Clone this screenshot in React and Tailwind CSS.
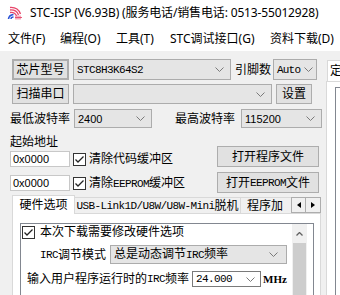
import React from "react";

function Chev() {
  return (
    <svg width="9" height="5" viewBox="0 0 9 5" className="shrink-0">
      <polyline points="0.5,0.5 4.5,4.5 8.5,0.5" fill="none" stroke="#7a7a7a" strokeWidth="1" />
    </svg>
  );
}

function Check() {
  return (
    <div className="w-[13px] h-[13px] border border-[#333333] bg-white flex items-center justify-center shrink-0">
      <svg width="11" height="11" viewBox="0 0 11 11">
        <polyline points="1.5,5.5 4,8 9.5,2.5" fill="none" stroke="#222222" strokeWidth="1.3" />
      </svg>
    </div>
  );
}

function Combo({ className, children }) {
  return (
    <div className={"h-full flex items-center justify-between border border-[#acacac] bg-[#e5e5e5] pl-[3px] shrink-0 overflow-hidden " + className}>
      <div className="whitespace-nowrap min-w-0">{children}</div>
      <Chev />
    </div>
  );
}

function Btn({ className, children }) {
  return (
    <div className={"h-full flex items-center justify-center bg-[#e1e1e1] border border-[#adadad] shrink-0 whitespace-nowrap " + className}>
      {children}
    </div>
  );
}

function Logo() {
  return (
    <svg width="16" height="14" viewBox="0 0 16 14">
      <path d="M3 1.5 Q11 1 13.5 8" fill="none" stroke="#e8466a" strokeWidth="1.3" />
      <path d="M3 4 Q9.5 3.5 11.5 9" fill="none" stroke="#e8466a" strokeWidth="1.3" />
      <path d="M3 6.5 Q8 6 9.5 10" fill="none" stroke="#e8466a" strokeWidth="1.3" />
      <path d="M1.5 13 Q2 9 6.5 8.5" fill="none" stroke="#2a52d6" strokeWidth="1.6" />
      <path d="M4 13 Q4 11 6.5 11" fill="none" stroke="#2a52d6" strokeWidth="1.4" />
      <path d="M9 10 V13.5 M11 9.5 V13.5 M13 9.5 V13.5 M8 11.5 H15" stroke="#e8466a" strokeWidth="0.9" />
    </svg>
  );
}

export default function App() {
  return (
    <div className="w-[340px] h-[295px] overflow-hidden bg-[#f0f0f0] text-black font-['Noto_Sans','Noto_Sans_CJK_SC',sans-serif] text-[12px] leading-[14px] flex flex-col">
      {/* title bar */}
      <div className="h-[27px] bg-white flex items-center shrink-0 whitespace-nowrap">
        <div className="ml-[7px] w-[16px] h-[14px] mb-[2px]">
          <Logo />
        </div>
        <div className="ml-[7px] mb-[1px] tracking-[-0.15px]">STC-ISP (V6.93B) (服务电话/销售电话: 0513-55012928)</div>
      </div>
      {/* menu bar */}
      <div className="h-[24px] bg-white flex items-center shrink-0 whitespace-nowrap pl-[8px]">
        <div className="w-[52px]">文件(F)</div>
        <div className="w-[56px]">编程(O)</div>
        <div className="w-[54px]">工具(T)</div>
        <div className="w-[100px]">STC调试接口(G)</div>
        <div className="w-[70px]">资料下载(D)</div>
      </div>
      {/* body */}
      <div className="flex-1 flex min-h-0">
        <div className="w-[322px] shrink-0 pl-[10px] pt-[8px] flex flex-col">
          {/* row 1 */}
          <div className="h-[21px] flex items-stretch shrink-0">
            <Btn className="ml-[2px] w-[57px] border-2 border-[#0078d7]">芯片型号</Btn>
            <Combo className="ml-[4px] w-[158px] pr-[6px] font-['Liberation_Mono',monospace] text-[11px] tracking-[-0.6px]">STC8H3K64S2</Combo>
            <div className="ml-[4px] w-[38px] flex items-center">引脚数</div>
            <Combo className="w-[44px] pr-[3px] font-['Liberation_Mono',monospace] text-[11px] tracking-[-0.8px]">Auto</Combo>
          </div>
          {/* row 2 */}
          <div className="mt-[4px] h-[20px] flex items-stretch shrink-0">
            <Btn className="ml-[2px] w-[57px]">扫描串口</Btn>
            <Combo className="ml-[4px] w-[199px] pr-[6px]"></Combo>
            <Btn className="ml-[4px] w-[36px]">设置</Btn>
          </div>
          {/* row 3 */}
          <div className="mt-[5px] h-[19px] flex items-stretch shrink-0">
            <div className="w-[64px] flex items-center">最低波特率</div>
            <Combo className="w-[78px] pr-[6px] font-['Liberation_Sans',sans-serif] text-[11px]">2400</Combo>
            <div className="ml-[23px] w-[66px] flex items-center">最高波特率</div>
            <Combo className="w-[81px] pr-[6px] font-['Liberation_Sans',sans-serif] text-[11px]">115200</Combo>
          </div>
          {/* address block */}
          <div className="flex shrink-0">
            <div className="w-[207px] flex flex-col">
              <div className="mt-[7px] h-[14px]">起始地址</div>
              <div className="mt-[2px] h-[16px] flex items-center">
                <div className="w-[60px] h-full bg-white border border-[#c8c8c8] pl-[2px] flex items-center font-['Liberation_Sans',sans-serif] text-[11px]">0x0000</div>
                <div className="ml-[3px]"><Check /></div>
                <div className="ml-[3px] whitespace-nowrap">清除代码缓冲区</div>
              </div>
              <div className="mt-[8px] h-[16px] flex items-center">
                <div className="w-[60px] h-full bg-white border border-[#c8c8c8] pl-[2px] flex items-center font-['Liberation_Sans',sans-serif] text-[11px]">0x0000</div>
                <div className="ml-[3px]"><Check /></div>
                <div className="ml-[3px] whitespace-nowrap">
                  清除<span className="font-['Liberation_Mono',monospace] text-[11px] tracking-[-0.6px]">EEPROM</span>缓冲区
                </div>
              </div>
            </div>
            <div className="flex flex-col">
              <div className="mt-[18px] h-[21px]">
                <Btn className="w-[102px]">打开程序文件</Btn>
              </div>
              <div className="mt-[5px] h-[21px]">
                <Btn className="w-[102px]">
                  打开<span className="font-['Liberation_Mono',monospace] text-[11px] tracking-[-0.6px]">EEPROM</span>文件
                </Btn>
              </div>
            </div>
          </div>
          {/* tabs */}
          <div className="mt-[2px] ml-[2px] w-[309px] h-[19px] flex items-end shrink-0 relative z-10">
            <div className="h-[19px] w-[63px] bg-white border border-b-0 border-[#d9d9d9] flex items-center justify-center">硬件选项</div>
            <div className="h-[17px] w-[166px] bg-[#f0f0f0] border border-l-0 border-[#d9d9d9] flex items-center justify-center whitespace-nowrap">
              <span className="font-['Liberation_Mono',monospace] text-[11px] tracking-[-0.6px]">USB-Link1D/U8W/U8W-Mini</span>脱机
            </div>
            <div className="h-[17px] flex-1 bg-[#f0f0f0] border border-l-0 border-r-0 border-[#d9d9d9] flex items-center pl-[6px] overflow-hidden whitespace-nowrap">程序加</div>
            <div className="h-[16px] mb-[1px] flex shrink-0">
              <div className="w-[15px] h-full border border-[#adadad] bg-[#f0f0f0] flex items-center justify-center">
                <svg width="4" height="6" viewBox="0 0 4 6"><polygon points="4,0 0,3 4,6" fill="#000" /></svg>
              </div>
              <div className="w-[15px] h-full border border-l-0 border-[#adadad] bg-[#f0f0f0] flex items-center justify-center">
                <svg width="4" height="6" viewBox="0 0 4 6"><polygon points="0,0 4,3 0,6" fill="#000" /></svg>
              </div>
            </div>
          </div>
          {/* tab panel */}
          <div className="-mt-px ml-[2px] w-[309px] flex-1 bg-white border border-b-0 border-[#d9d9d9] pl-[7px] pr-[6px] pt-[9px]">
            <div className="h-full border border-b-0 border-[#828790] bg-white flex">
              <div className="flex-1 flex flex-col">
                <div className="h-[14px] mt-[1px] flex items-center">
                  <div className="ml-[1px]"><Check /></div>
                  <div className="ml-[5px] whitespace-nowrap">本次下载需要修改硬件选项</div>
                </div>
                <div className="mt-[6px] h-[19px] flex items-stretch">
                  <div className="ml-[19px] w-[70px] flex items-center whitespace-nowrap">
                    <span className="font-['Liberation_Mono',monospace] text-[11px] tracking-[-0.6px]">IRC</span>调节模式
                  </div>
                  <Combo className="w-[177px] pr-[8px]">总是动态调节<span className="font-['Liberation_Mono',monospace] text-[11px] tracking-[-0.6px]">IRC</span>频率</Combo>
                </div>
                <div className="mt-[7px] h-[16px] flex items-stretch">
                  <div className="ml-[6px] w-[165px] flex items-center whitespace-nowrap">
                    输入用户程序运行时的<span className="font-['Liberation_Mono',monospace] text-[11px] tracking-[-0.6px]">IRC</span>频率
                  </div>
                  <div className="w-[69px] h-full bg-white border border-[#7a7a7a] flex items-center justify-between pl-[3px] pr-[5px]">
                    <span className="font-['Liberation_Mono',monospace] text-[11px] tracking-[-0.6px]">24.000</span>
                    <Chev />
                  </div>
                  <div className="ml-[2px] flex items-center font-['Liberation_Serif',serif] font-bold text-[11px]">MHz</div>
                </div>
              </div>
              <div className="w-[15px] mr-[6px] bg-[#f0f0f0] flex flex-col items-center shrink-0">
                <div className="h-[19px] w-full flex items-center justify-center">
                  <svg width="7" height="4" viewBox="0 0 7 4"><polyline points="0.5,3.5 3.5,0.5 6.5,3.5" fill="none" stroke="#606060" strokeWidth="1.3" /></svg>
                </div>
                <div className="w-[13px] flex-1 bg-[#cdcdcd]" />
              </div>
            </div>
          </div>
        </div>
        {/* right panel */}
        <div className="flex-1 flex flex-col pt-[9px] min-w-0">
          <div className="ml-[5px] h-[21px] w-[40px] bg-white border border-b-0 border-[#d9d9d9] flex items-center pl-[2px] whitespace-nowrap overflow-hidden shrink-0">定</div>
          <div className="ml-[4px] flex-1 bg-white border-l border-t border-[#d9d9d9] pl-[8px] pt-[5px]">
            <div className="h-full border-l border-t border-[#828790] bg-white" />
          </div>
        </div>
      </div>
    </div>
  );
}
